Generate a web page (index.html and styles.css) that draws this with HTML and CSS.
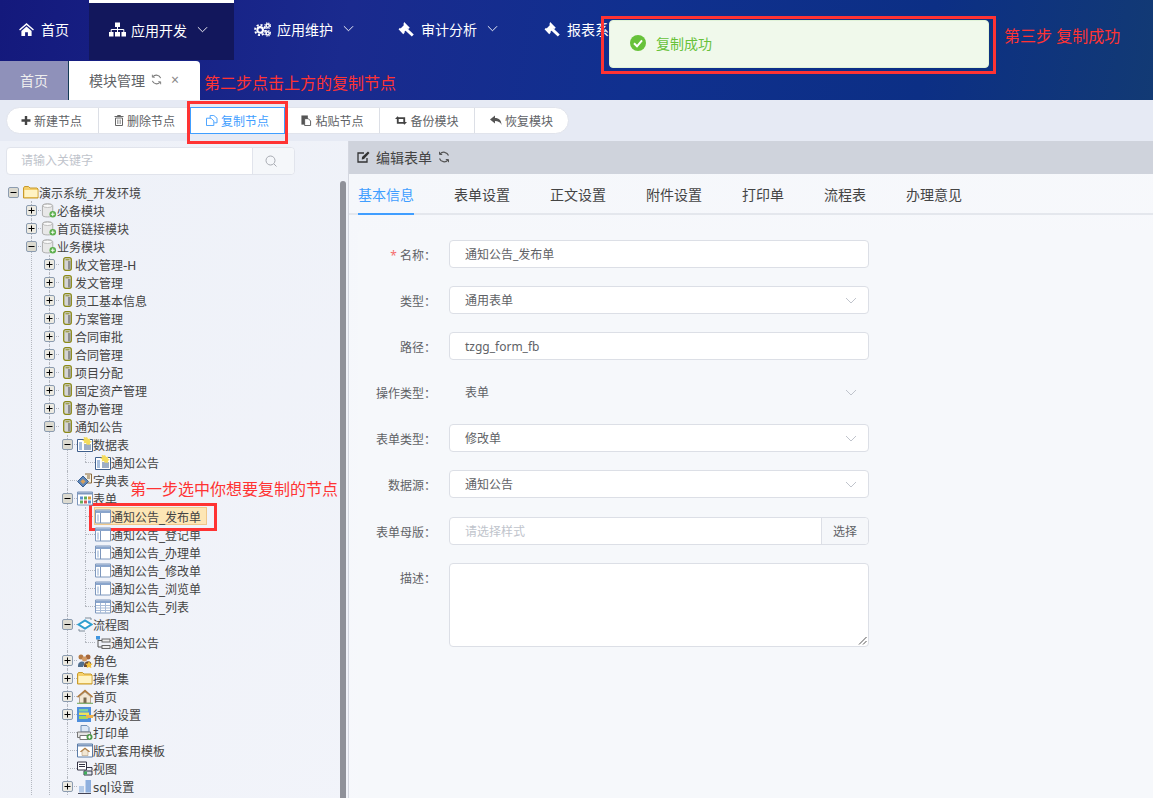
FILE: index.html
```html
<!DOCTYPE html>
<html lang="zh-CN">
<head>
    <meta charset="UTF-8">
    <title>模块管理</title>
    <link rel="stylesheet" href="styles.css">
</head>
<body>
    <svg class="defs" width="0" height="0">
        <symbol id="i-plusbox" viewBox="0 0 11 11"><rect x=".5" y=".5" width="10" height="10" rx="1.5" fill="#eceae2" stroke="#8c9cb0"/><path d="M2.5 5.5h6M5.5 2.5v6" stroke="#000"/></symbol>
        <symbol id="i-minusbox" viewBox="0 0 11 11"><rect x=".5" y=".5" width="10" height="10" rx="1.5" fill="#dcdad0" stroke="#8c9cb0"/><path d="M2.5 5.5h6" stroke="#000"/></symbol>
        <symbol id="i-folder" viewBox="0 0 16 14"><path d="M.5 12.500v-10l1-1.500h4l1.500 1.500h7l1 1v9z" fill="#f5cf6a" stroke="#c79a2c"/><path d="M1.500 4.500h13v7h-13z" fill="#fff3c4"/></symbol>
        <symbol id="i-db" viewBox="0 0 16 16"><path d="M1 3c0-3 11-3 11 0v10c0 2.500-11 2.500-11 0z" fill="#e8e8e8" stroke="#aaa"/><ellipse cx="6.500" cy="3" rx="5" ry="1.800" fill="#fafafa" stroke="#bbb"/><circle cx="12" cy="12" r="3.500" fill="#5caf4d"/><path d="M10 12h4M12 10v4" stroke="#fff"/></symbol>
        <symbol id="i-cyl" viewBox="0 0 9 14"><rect x=".7" y=".7" width="7.600" height="12.600" rx="2" fill="#d4d4d4" stroke="#8b8a17" stroke-width="1.300"/><path d="M2.500 2.800h4" stroke="#8b8a17"/><path d="M5 4h2.400v8.500H5z" fill="#8f8f8f"/></symbol>
        <symbol id="i-tablestar" viewBox="0 0 16 15"><path d="M.5 2.500h15v12H.5z" fill="#fff" stroke="#3f5f8c"/><path d="M2 5h3v8H2z" fill="#a9c0de"/><path d="M7 8h7M7 10h7M7 12h7" stroke="#3f5f8c"/><path d="M10 0l1.100 2 2.300-.6-.6 2.300 2 1.100-2 1.100.6 2.100-2.300-.5L10 8l-1.100-2-2.300.5.6-2.100-2-1.100 2-1.100-.6-2.300 2.300.6z" fill="#f4dc5c"/></symbol>
        <symbol id="i-dict" viewBox="0 0 16 15"><path d="M8 1h6.500v9H9" fill="#f4f0e4" stroke="#8a6a3a"/><path d="M10 3h3M10 5h3" stroke="#8a6a3a"/><path d="M.5 8.500L6 3l5.500 5.500L6 14z" fill="#5f87b8" stroke="#3a5f90"/><path d="M6 6l2.500 2.500L6 11 3.500 8.500z" fill="#d8a05a"/></symbol>
        <symbol id="i-grid" viewBox="0 0 16 14"><path d="M.5 .5h15v13H.5z" fill="#fff" stroke="#7d97bd"/><path d="M1 1h14v2H1z" fill="#7d97bd"/><path d="M3 5h3v3H3z" fill="#5a8fd0"/><path d="M7 5h3v3H7z" fill="#62ad5c"/><path d="M11 5h3v3h-3z" fill="#d69a3c"/><path d="M3 9h3v3H3z" fill="#62ad5c"/><path d="M7 9h3v3H7z" fill="#d05a5a"/><path d="M11 9h3v3h-3z" fill="#5a8fd0"/></symbol>
        <symbol id="i-form" viewBox="0 0 16 14"><path d="M.5 .5h15v13H.5z" fill="#fff" stroke="#7d97bd"/><path d="M1 1h14v2.500H1z" fill="#8aa5cc"/><path d="M5.500 3.500v10" stroke="#7d97bd"/><path d="M2 5h2v7H2z" fill="#c5d4e8"/></symbol>
        <symbol id="i-list" viewBox="0 0 16 14"><path d="M.5 .5h15v13H.5z" fill="#fff" stroke="#7d97bd"/><path d="M1 1h14v2.500H1z" fill="#8aa5cc"/><path d="M1 6h14M1 8.500h14M1 11h14M5.500 3.500v10M10.500 3.500v10" stroke="#a9bcd8"/></symbol>
        <symbol id="i-flow" viewBox="0 0 16 14"><path d="M1.500 7L8 3l6.500 4L8 11z" fill="#fff" stroke="#2f9fcf" stroke-width="2"/><path d="M8 .5h6v2M8 13.500H2v-2" fill="none" stroke="#7f8c99"/></symbol>
        <symbol id="i-flowleaf" viewBox="0 0 16 15"><rect x="1" y="1" width="4" height="3.500" fill="#3f95e0"/><rect x="7" y="4" width="8" height="3" fill="#eee" stroke="#666"/><rect x="7" y="10.500" width="8" height="3" fill="#eee" stroke="#666"/><path d="M3 4.500V12h4M3 5.500h4" fill="none" stroke="#555"/></symbol>
        <symbol id="i-role" viewBox="0 0 16 15"><circle cx="4" cy="4" r="2.500" fill="#b57a44"/><circle cx="11" cy="4" r="2.500" fill="#a5663a"/><circle cx="7.500" cy="6" r="2.500" fill="#d39a64"/><path d="M1 13c0-5 5-5 6-4s-1 5-1 5H1z" fill="#52708f"/><path d="M7 12c0-4 6-5 7-2v4H7z" fill="#6d4b32"/><path d="M12 8l1.200 2.400 2.600.4-1.900 1.800.5 2.500-2.400-1.200-2.300 1.200.4-2.500-1.900-1.800 2.600-.4z" fill="#f5c23c"/></symbol>
        <symbol id="i-home" viewBox="0 0 16 15"><path d="M0 7.500L8 .5l8 7-1 1.200-7-5.700-7 5.700z" fill="#b07a3c"/><path d="M2.500 7.500L8 3l5.500 4.500V14h-11z" fill="#f3e7d2" stroke="#a08a6c" stroke-width=".7"/><path d="M6.500 8.500h3V14h-3z" fill="#7a6a50"/><path d="M0 14.300h16" stroke="#6fa55a"/></symbol>
        <symbol id="i-todo" viewBox="0 0 16 15"><path d="M0 0h14v15H0z" fill="#4f8fdc"/><path d="M2 2h9v2.500H2z" fill="#7ed0a0"/><path d="M2 5.500h10V8H2z" fill="#f0e35a"/><path d="M2 9h9v3H2z" fill="#a6d85a"/><path d="M9 8h7v3H9z" fill="#eeb24c"/></symbol>
        <symbol id="i-print" viewBox="0 0 16 15"><path d="M4 .5h6l2 2V7H4z" fill="#dbe7f6" stroke="#6f8fb5"/><path d="M.5 7h13v5.500H.5z" fill="#e5e5e5" stroke="#777"/><path d="M3 10.500h8v4H3z" fill="#fff" stroke="#777"/><circle cx="12.500" cy="12" r="3" fill="#4f9a4a"/><path d="M11 12h3M12.500 10.500v3" stroke="#fff"/></symbol>
        <symbol id="i-tpl" viewBox="0 0 16 14"><path d="M.5 .5h15v13H.5z" fill="#fff" stroke="#5a7ca8"/><path d="M1 1h14v2H1z" fill="#7d97bd"/><path d="M3 8l5-4 5 4-1 .7-4-3-4 3z" fill="#b07a3c"/><path d="M5 8l3-2.400L11 8v4H5z" fill="#f3e7d2" stroke="#a08a6c" stroke-width=".5"/></symbol>
        <symbol id="i-view" viewBox="0 0 16 14"><path d="M.5 .5h9v8h-9z" fill="#fff" stroke="#334"/><path d="M2 3h6M2 5h6" stroke="#334"/><path d="M7 9.500h8v4H7z" fill="#dde3ea" stroke="#334"/><path d="M10 6h5v3" fill="none" stroke="#334"/><path d="M7 10h3v3H7z" fill="#3fae5a"/></symbol>
        <symbol id="i-bars" viewBox="0 0 16 15"><path d="M2 7h5v6.500H2z" fill="#b5cbe8"/><path d="M8.500 1H14v12.500H8.500z" fill="#8fb0de"/><path d="M1 14.500h13" stroke="#445"/></symbol>
        <symbol id="i-chev" viewBox="0 0 12 7"><path d="M1 1l5 5 5-5" fill="none" stroke="currentColor"/></symbol>
        <symbol id="i-gavel" viewBox="0 0 17 16"><path d="M6 0l6 6-1.500 1.500-.6-.5-3.800 3.600.6.700L5 13 0 7.800l1.600-1.600.6.600 3.600-3.700-.6-.7z" fill="#fff"/><path d="M8 7.600l7.200 6.900" stroke="#fff" stroke-width="3"/></symbol>
        <symbol id="i-refresh" viewBox="0 0 12 12"><path d="M10.500 4.500A5 5 0 0 0 2 3M1.500 7.500A5 5 0 0 0 10 9" fill="none" stroke="currentColor" stroke-width="1.200"/><path d="M1.500 .8V3.500H4.200M10.500 11.200V8.500H7.800" fill="none" stroke="currentColor"/></symbol>
    </svg>

    <header class="top">
        <nav class="nav">
            <a class="nav-item nav-home">
                <svg class="nav-ico ico-house" viewBox="0 0 16 14"><path d="M8 0l8 7-1 1.200L8 2.200 1 8.200 0 7zM2.500 8.500L8 3.800l5.500 4.700V14h-4v-4h-3v4h-4z" fill="#fff"/></svg>
                首页
            </a>
            <a class="nav-item active">
                <svg class="nav-ico" viewBox="0 0 17 14"><path d="M6 0h5v4.500H6zM0 9.500h4.500V14H0zM6 9.500h5V14H6zM12.500 9.500H17V14h-4.500z" fill="#fff"/><path d="M8.500 4.500v5M2.200 9.500V7h12.600v2.500" fill="none" stroke="#fff"/></svg>
                应用开发<svg class="nav-chev"><use href="#i-chev"/></svg>
            </a>
            <a class="nav-item">
                <svg class="nav-ico" viewBox="0 0 18 15"><circle cx="6.500" cy="8" r="3" fill="none" stroke="#fff" stroke-width="2.200"/><circle cx="6.500" cy="8" r="5.400" fill="none" stroke="#fff" stroke-width="2" stroke-dasharray="2.200 2"/><circle cx="14.500" cy="3.500" r="1.700" fill="none" stroke="#fff" stroke-width="1.600"/><circle cx="14.500" cy="3.500" r="3" fill="none" stroke="#fff" stroke-width="1.200" stroke-dasharray="1.300 1.100"/><circle cx="14.500" cy="11.500" r="1.700" fill="none" stroke="#fff" stroke-width="1.600"/><circle cx="14.500" cy="11.500" r="3" fill="none" stroke="#fff" stroke-width="1.200" stroke-dasharray="1.300 1.100"/></svg>
                应用维护<svg class="nav-chev"><use href="#i-chev"/></svg>
            </a>
            <a class="nav-item">
                <svg class="nav-ico"><use href="#i-gavel"/></svg>
                审计分析<svg class="nav-chev"><use href="#i-chev"/></svg>
            </a>
            <a class="nav-item">
                <svg class="nav-ico"><use href="#i-gavel"/></svg>
                报表系统
            </a>
        </nav>
        <div class="tabs">
            <a class="tab tab-home">首页</a>
            <a class="tab tab-cur">模块管理
                <svg class="tab-ico"><use href="#i-refresh"/></svg>
                <span class="tab-x">×</span>
            </a>
        </div>
    </header>

    <div class="toolbar">
        <div class="btn-group">
            <a class="btn btn-new"><svg class="btn-ico" viewBox="0 0 10 10"><path d="M5 .5v9M.5 5h9" stroke="#444" stroke-width="2.400"/></svg>新建节点</a>
            <a class="btn btn-del"><svg class="btn-ico" viewBox="0 0 10 11"><path d="M1.500 3h7v7.500h-7zM.5 1.500h9M3.500 1.500V.5h3v1" fill="none" stroke="#666"/><path d="M3.500 4.500v4.500M5 4.500v4.500M6.500 4.500v4.500" stroke="#888" stroke-width=".7"/></svg>删除节点</a>
            <a class="btn btn-copy"><svg class="btn-ico ico-wide" viewBox="0 0 13 12"><path d="M4.500 3.500V.5h4l3.500 3v5H9M.5 3.500h5l3 3v5h-8z" fill="none" stroke="#409eff"/></svg>复制节点</a>
            <a class="btn btn-paste"><svg class="btn-ico ico-wide" viewBox="0 0 11 12"><path d="M.5 .5h7v10h-7z" fill="#555"/><path d="M4 4h4l2.500 2.500v5H4z" fill="#fff" stroke="#555"/></svg>粘贴节点</a>
            <a class="btn btn-back"><svg class="btn-ico ico-wide" viewBox="0 0 13 10"><path d="M0 3.500L2.800 .5l2.800 3H4v3h4l1.800 2H2V3.500zM13 6.500L10.200 9.500 7.400 6.500H9v-3H5L3.200 1.500H11v5z" fill="#444"/></svg>备份模块</a>
            <a class="btn btn-restore"><svg class="btn-ico ico-wide" viewBox="0 0 12 10"><path d="M5 0v2.500c4 0 6.500 2.500 6.500 7C10.500 6.500 8 5.500 5 5.500V8L0 4z" fill="#555"/></svg>恢复模块</a>
        </div>
    </div>

    <div class="main">
        <aside class="side">
            <div class="search">
                <span class="search-input">请输入关键字</span>
                <span class="search-btn"><svg viewBox="0 0 12 12" width="12" height="12"><circle cx="5.500" cy="5.500" r="4.500" fill="none" stroke="#a8abb2"/><path d="M9 9l2.500 2.500" stroke="#a8abb2"/></svg></span>
            </div>
            <div class="tree-wrap">
                <ul class="tree root">
                    <li>
                        <div class="node"><svg class="tog"><use href="#i-minusbox"/></svg><svg class="ico"><use href="#i-folder"/></svg>演示系统_开发环境</div>
                        <ul class="tree">
                            <li><div class="node"><svg class="tog"><use href="#i-plusbox"/></svg><svg class="ico"><use href="#i-db"/></svg>必备模块</div></li>
                            <li><div class="node"><svg class="tog"><use href="#i-plusbox"/></svg><svg class="ico"><use href="#i-db"/></svg>首页链接模块</div></li>
                            <li>
                                <div class="node"><svg class="tog"><use href="#i-minusbox"/></svg><svg class="ico"><use href="#i-db"/></svg>业务模块</div>
                                <ul class="tree">
                                    <li><div class="node"><svg class="tog"><use href="#i-plusbox"/></svg><svg class="ico ico-cyl"><use href="#i-cyl"/></svg>收文管理-H</div></li>
                                    <li><div class="node"><svg class="tog"><use href="#i-plusbox"/></svg><svg class="ico ico-cyl"><use href="#i-cyl"/></svg>发文管理</div></li>
                                    <li><div class="node"><svg class="tog"><use href="#i-plusbox"/></svg><svg class="ico ico-cyl"><use href="#i-cyl"/></svg>员工基本信息</div></li>
                                    <li><div class="node"><svg class="tog"><use href="#i-plusbox"/></svg><svg class="ico ico-cyl"><use href="#i-cyl"/></svg>方案管理</div></li>
                                    <li><div class="node"><svg class="tog"><use href="#i-plusbox"/></svg><svg class="ico ico-cyl"><use href="#i-cyl"/></svg>合同审批</div></li>
                                    <li><div class="node"><svg class="tog"><use href="#i-plusbox"/></svg><svg class="ico ico-cyl"><use href="#i-cyl"/></svg>合同管理</div></li>
                                    <li><div class="node"><svg class="tog"><use href="#i-plusbox"/></svg><svg class="ico ico-cyl"><use href="#i-cyl"/></svg>项目分配</div></li>
                                    <li><div class="node"><svg class="tog"><use href="#i-plusbox"/></svg><svg class="ico ico-cyl"><use href="#i-cyl"/></svg>固定资产管理</div></li>
                                    <li><div class="node"><svg class="tog"><use href="#i-plusbox"/></svg><svg class="ico ico-cyl"><use href="#i-cyl"/></svg>督办管理</div></li>
                                    <li>
                                        <div class="node"><svg class="tog"><use href="#i-minusbox"/></svg><svg class="ico ico-cyl"><use href="#i-cyl"/></svg>通知公告</div>
                                        <ul class="tree">
                                            <li>
                                                <div class="node"><svg class="tog"><use href="#i-minusbox"/></svg><svg class="ico"><use href="#i-tablestar"/></svg>数据表</div>
                                                <ul class="tree">
                                                    <li class="end"><div class="node leaf"><svg class="ico"><use href="#i-tablestar"/></svg>通知公告</div></li>
                                                </ul>
                                            </li>
                                            <li><div class="node leaf"><svg class="ico"><use href="#i-dict"/></svg>字典表</div></li>
                                            <li>
                                                <div class="node"><svg class="tog"><use href="#i-minusbox"/></svg><svg class="ico"><use href="#i-grid"/></svg>表单</div>
                                                <ul class="tree">
                                                    <li><div class="node leaf"><span class="picked"><svg class="ico"><use href="#i-form"/></svg>通知公告_发布单</span></div></li>
                                                    <li><div class="node leaf"><svg class="ico"><use href="#i-form"/></svg>通知公告_登记单</div></li>
                                                    <li><div class="node leaf"><svg class="ico"><use href="#i-form"/></svg>通知公告_办理单</div></li>
                                                    <li><div class="node leaf"><svg class="ico"><use href="#i-form"/></svg>通知公告_修改单</div></li>
                                                    <li><div class="node leaf"><svg class="ico"><use href="#i-form"/></svg>通知公告_浏览单</div></li>
                                                    <li class="end"><div class="node leaf"><svg class="ico"><use href="#i-list"/></svg>通知公告_列表</div></li>
                                                </ul>
                                            </li>
                                            <li>
                                                <div class="node"><svg class="tog"><use href="#i-minusbox"/></svg><svg class="ico"><use href="#i-flow"/></svg>流程图</div>
                                                <ul class="tree">
                                                    <li class="end"><div class="node leaf"><svg class="ico"><use href="#i-flowleaf"/></svg>通知公告</div></li>
                                                </ul>
                                            </li>
                                            <li><div class="node"><svg class="tog"><use href="#i-plusbox"/></svg><svg class="ico"><use href="#i-role"/></svg>角色</div></li>
                                            <li><div class="node"><svg class="tog"><use href="#i-plusbox"/></svg><svg class="ico"><use href="#i-folder"/></svg>操作集</div></li>
                                            <li><div class="node"><svg class="tog"><use href="#i-plusbox"/></svg><svg class="ico"><use href="#i-home"/></svg>首页</div></li>
                                            <li><div class="node"><svg class="tog"><use href="#i-plusbox"/></svg><svg class="ico"><use href="#i-todo"/></svg>待办设置</div></li>
                                            <li><div class="node leaf"><svg class="ico"><use href="#i-print"/></svg>打印单</div></li>
                                            <li><div class="node leaf"><svg class="ico"><use href="#i-tpl"/></svg>版式套用模板</div></li>
                                            <li><div class="node leaf"><svg class="ico"><use href="#i-view"/></svg>视图</div></li>
                                            <li><div class="node"><svg class="tog"><use href="#i-plusbox"/></svg><svg class="ico"><use href="#i-bars"/></svg>sql设置</div></li>
                                        </ul>
                                    </li>
                                </ul>
                            </li>
                        </ul>
                    </li>
                </ul>
            </div>
            <div class="scroll-thumb"></div>
        </aside>

        <section class="panel">
            <div class="panel-head">
                <svg class="head-ico" viewBox="0 0 13 12"><path d="M10 7v4H1V2h6" fill="none" stroke="#333" stroke-width="1.300"/><path d="M5 6l6-5.500 1.500 1.500L7 8l-2.200.5z" fill="#333"/></svg>
                编辑表单
                <svg class="head-ico head-re"><use href="#i-refresh"/></svg>
            </div>
            <div class="panel-tabs">
                <a class="ptab on">基本信息</a>
                <a class="ptab">表单设置</a>
                <a class="ptab">正文设置</a>
                <a class="ptab">附件设置</a>
                <a class="ptab">打印单</a>
                <a class="ptab">流程表</a>
                <a class="ptab">办理意见</a>
            </div>
            <div class="card">
                <div class="row">
                    <label class="lab"><i>*</i> 名称<span class="colon">：</span></label>
                    <div class="field">通知公告_发布单</div>
                </div>
                <div class="row">
                    <label class="lab">类型<span class="colon">：</span></label>
                    <div class="field">通用表单<svg class="arrow"><use href="#i-chev"/></svg></div>
                </div>
                <div class="row">
                    <label class="lab">路径<span class="colon">：</span></label>
                    <div class="field">tzgg_form_fb</div>
                </div>
                <div class="row">
                    <label class="lab">操作类型<span class="colon">：</span></label>
                    <div class="field field-off">表单<svg class="arrow"><use href="#i-chev"/></svg></div>
                </div>
                <div class="row">
                    <label class="lab">表单类型<span class="colon">：</span></label>
                    <div class="field">修改单<svg class="arrow"><use href="#i-chev"/></svg></div>
                </div>
                <div class="row">
                    <label class="lab">数据源<span class="colon">：</span></label>
                    <div class="field">通知公告<svg class="arrow"><use href="#i-chev"/></svg></div>
                </div>
                <div class="row row-pick">
                    <label class="lab">表单母版<span class="colon">：</span></label>
                    <div class="field field-pick"><span class="ph">请选择样式</span><span class="pick-btn">选择</span></div>
                </div>
                <div class="row">
                    <label class="lab">描述<span class="colon">：</span></label>
                    <div class="field field-area"><svg class="grip" viewBox="0 0 9 9"><path d="M8.500 1L1 8.500M8.500 5L5 8.500" stroke="#555"/></svg></div>
                </div>
            </div>
        </section>
    </div>

    <!-- toast + the red notes drawn over the shot -->
    <div class="toast">
        <svg class="toast-ico" viewBox="0 0 16 16"><circle cx="8" cy="8" r="8" fill="#67c23a"/><path d="M4 8.300l3 3 5-6" fill="none" stroke="#fff" stroke-width="2"/></svg>
        复制成功
    </div>
    <div class="mark mark-toast"></div>
    <div class="mark mark-copy"></div>
    <div class="mark mark-node"></div>
    <span class="note note-1">第一步选中你想要复制的节点</span>
    <span class="note note-2">第二步点击上方的复制节点</span>
    <span class="note note-3">第三步 复制成功</span>
</body>
</html>
```

FILE: styles.css
```css
*{
    box-sizing: border-box;
}

html, body{
    margin: 0;
    height: 798px;
    overflow: hidden;
}

body{
    position: relative;
    font-family: "Noto Sans", "Noto Sans CJK SC", sans-serif;
    font-size: 12px;
    color: #606266;
    background-color: #eff2f8;
}

.defs{
    position: absolute;
}

/* top */
.top{
    height: 100px;
    background: linear-gradient(100deg, #14197c 0%, #1a2a8e 30%, #10308f 55%, #0c2f85 80%, #123a74 100%);
}

.nav{
    height: 60px;
    display: flex;
}

.nav-item{
    display: flex;
    align-items: center;
    height: 60px;
    padding: 0 24px 2px 20px;
    color: #fff;
    font-size: 14px;
}

.nav-home{
    width: 89px;
    padding-left: 19px;
    padding-right: 0;
}

.nav-item.active{
    width: 145px;
    background-color: #12175c;
    border-top: 3px solid #fff;
    padding-bottom: 4px;
}

.nav-item:last-child{
    margin-left: 2px;
}

.nav-ico{
    width: 17px;
    height: 15px;
    margin-right: 6px;
    flex-shrink: 0;
}

.nav-item.active .nav-ico{
    margin-right: 5px;
}

.ico-house{
    width: 15px;
    height: 13px;
    margin-right: 7px;
}

.nav-chev{
    width: 11px;
    height: 7px;
    margin-left: 10px;
    margin-bottom: 1px;
}

.tabs{
    height: 40px;
    padding-top: 1px;
    display: flex;
}

.tab{
    display: flex;
    align-items: center;
    padding-bottom: 2px;
    font-size: 14px;
}

.tab-home{
    width: 69px;
    justify-content: center;
    color: #eee;
    background-color: #8f91ba;
    border-right: 1px solid #123a55;
}

.tab-cur{
    width: 131px;
    padding-left: 20px;
    color: #606266;
    background-color: #fff;
    border-radius: 0 4px 0 0;
}

.tab-ico{
    width: 11px;
    height: 11px;
    margin-left: 6px;
    color: #777;
}

.tab-x{
    margin-left: 9px;
    font-size: 14px;
    color: #888;
}

/* toolbar */
.toolbar{
    height: 41px;
    padding: 7px 6px 0;
    background-color: #e6eaf4;
}

.btn-group{
    display: inline-flex;
    height: 27px;
    background-color: #fff;
    border: 1px solid #e1e4ec;
    border-radius: 14px;
}

.btn{
    display: flex;
    align-items: center;
    justify-content: center;
    border-left: 1px solid #dcdfe6;
}

.btn-new{
    width: 91px;
    padding-right: 2px;
    border-left: none;
}

.btn-del{
    width: 92px;
}

.btn-copy{
    width: 95px;
    margin: -1px 0;
    color: #409eff;
    border: 1px solid #409eff;
}

.btn-paste{
    width: 94px;
    border-left: none;
}

.btn-back{
    width: 95px;
}

.btn-restore{
    width: 94px;
}

.btn-ico{
    width: 10px;
    height: 11px;
    margin-right: 3px;
}

.ico-wide{
    width: 12px;
}

/* main */
.main{
    display: flex;
    height: 657px;
    background: linear-gradient(135deg, #eef1f8, #f2f4fa 60%, #f3f5fa);
}

.side{
    position: relative;
    width: 349px;
    flex-shrink: 0;
    border-right: 1px solid #d4d7e0;
}

.search{
    display: flex;
    width: 289px;
    height: 28px;
    margin: 6px 0 0 6px;
    background-color: #fff;
    border: 1px solid #e1e4ec;
    border-radius: 4px;
}

.search-input{
    flex: 1;
    padding-left: 14px;
    line-height: 26px;
    color: #c0c4cc;
}

.search-btn{
    width: 42px;
    display: flex;
    align-items: center;
    padding-left: 12px;
    background-color: #f5f7fa;
    border-left: 1px solid #e1e4ec;
    border-radius: 0 4px 4px 0;
}

.tree-wrap{
    height: 623px;
    padding: 8px 0 0 8px;
    overflow: hidden;
}

.scroll-thumb{
    position: absolute;
    top: 40px;
    right: 2px;
    bottom: 0;
    width: 6px;
    background-color: #8f9199;
    border-radius: 3px 3px 0 0;
}

/* tree */
.tree{
    list-style: none;
    margin: 0;
    padding: 0 0 0 18px;
    font-family: "DejaVu Sans", "Noto Sans CJK SC", sans-serif;
}

.tree.root{
    padding-left: 0;
}

.tree li{
    position: relative;
}

.tree .tree li::before{
    content: "";
    position: absolute;
    left: 5px;
    top: 0;
    bottom: 0;
    border-left: 1px dotted #b4b8c0;
}

.tree .tree li.end::before{
    bottom: auto;
    height: 9px;
}

.node{
    position: relative;
    display: flex;
    align-items: center;
    height: 18px;
    color: #444;
    white-space: nowrap;
}

.tree .tree .node::before{
    content: "";
    position: absolute;
    left: 5px;
    top: 9px;
    width: 10px;
    border-top: 1px dotted #b4b8c0;
}

.tog{
    position: relative;
    z-index: 1;
    width: 11px;
    height: 11px;
    margin-right: 4px;
    flex-shrink: 0;
}

.ico{
    position: relative;
    z-index: 1;
    width: 16px;
    height: 15px;
    flex-shrink: 0;
}

.ico-cyl{
    width: 9px;
    height: 14px;
    margin: 0 3px 0 4px;
}

.leaf{
    padding-left: 15px;
}

.picked{
    position: relative;
    z-index: 1;
    display: flex;
    align-items: center;
    height: 18px;
    padding-right: 5px;
    background-color: #fde6b5;
    border: 1px solid #f0c78a;
    margin-left: -1px;
}

/* right */
.panel{
    flex: 1;
    min-width: 0;
    background: linear-gradient(135deg, #f5f7fb, #f8f9fc);
}

.panel-head{
    display: flex;
    align-items: center;
    height: 33px;
    padding: 0 0 2px 8px;
    color: #444;
    font-size: 14px;
    background-color: #cfd3dc;
}

.head-ico{
    width: 13px;
    height: 12px;
    margin-right: 6px;
}

.head-re{
    width: 12px;
    margin-left: 6px;
    color: #555;
}

.panel-tabs{
    display: flex;
    gap: 40px;
    height: 41px;
    padding-left: 9px;
    border-bottom: 2px solid #e4e7ed;
}

.ptab{
    height: 41px;
    line-height: 41px;
    font-size: 14px;
    color: #444;
}

.ptab.on{
    color: #409eff;
    border-bottom: 2px solid #409eff;
}

.card{
    margin: 15px 0 0 9px;
    padding-top: 10px;
    background-color: #f6f8fb;
    display: flex;
    flex-direction: column;
    gap: 18px;
    border-radius: 4px 0 0 0;
    height: 568px;
}

.row{
    display: flex;
}

.row-pick{
    margin-top: 1px;
}

.lab{
    width: 78px;
    height: 28px;
    line-height: 30px;
    text-align: right;
    margin-right: 13px;
}

.lab i{
    color: #f56c6c;
    font-style: normal;
}

.colon{
    font-family: "Noto Sans CJK TC", sans-serif;
}

.field{
    position: relative;
    width: 420px;
    height: 28px;
    padding-left: 15px;
    line-height: 28px;
    background-color: #fff;
    border: 1px solid #dcdfe6;
    border-radius: 4px;
}

.field-off{
    background: none;
    border-color: transparent;
}

.arrow{
    position: absolute;
    right: 11px;
    top: 10px;
    width: 12px;
    height: 7px;
    color: #c0c4cc;
}

.field-pick{
    display: flex;
    justify-content: space-between;
    padding-right: 0;
}

.ph{
    color: #c0c4cc;
}

.pick-btn{
    width: 47px;
    text-align: center;
    background-color: #f5f7fa;
    border-left: 1px solid #dcdfe6;
    border-radius: 0 4px 4px 0;
}

.field-area{
    height: 84px;
}

.grip{
    position: absolute;
    right: 1px;
    bottom: 1px;
    width: 9px;
    height: 9px;
}

/* overlays */
.toast{
    position: absolute;
    left: 609px;
    top: 20px;
    width: 380px;
    height: 48px;
    display: flex;
    align-items: center;
    padding: 0 0 2px 20px;
    font-size: 14px;
    color: #67c23a;
    background-color: #f0f9eb;
    border: 1px solid #e1f3d8;
    border-radius: 4px;
}

.toast-ico{
    width: 16px;
    height: 16px;
    margin-right: 10px;
}

.mark{
    position: absolute;
    border: 3px solid #f33;
}

.mark-toast{
    left: 601px;
    top: 16px;
    width: 395px;
    height: 58px;
}

.mark-copy{
    left: 187px;
    top: 101px;
    width: 101px;
    height: 43px;
}

.mark-node{
    left: 89px;
    top: 503px;
    width: 128px;
    height: 28px;
}

.note{
    position: absolute;
    font-size: 16px;
    line-height: 20px;
    color: #f33;
    white-space: nowrap;
}

.note-1{
    left: 130px;
    top: 479px;
}

.note-2{
    left: 204px;
    top: 73px;
}

.note-3{
    left: 1004px;
    top: 26px;
}
```
